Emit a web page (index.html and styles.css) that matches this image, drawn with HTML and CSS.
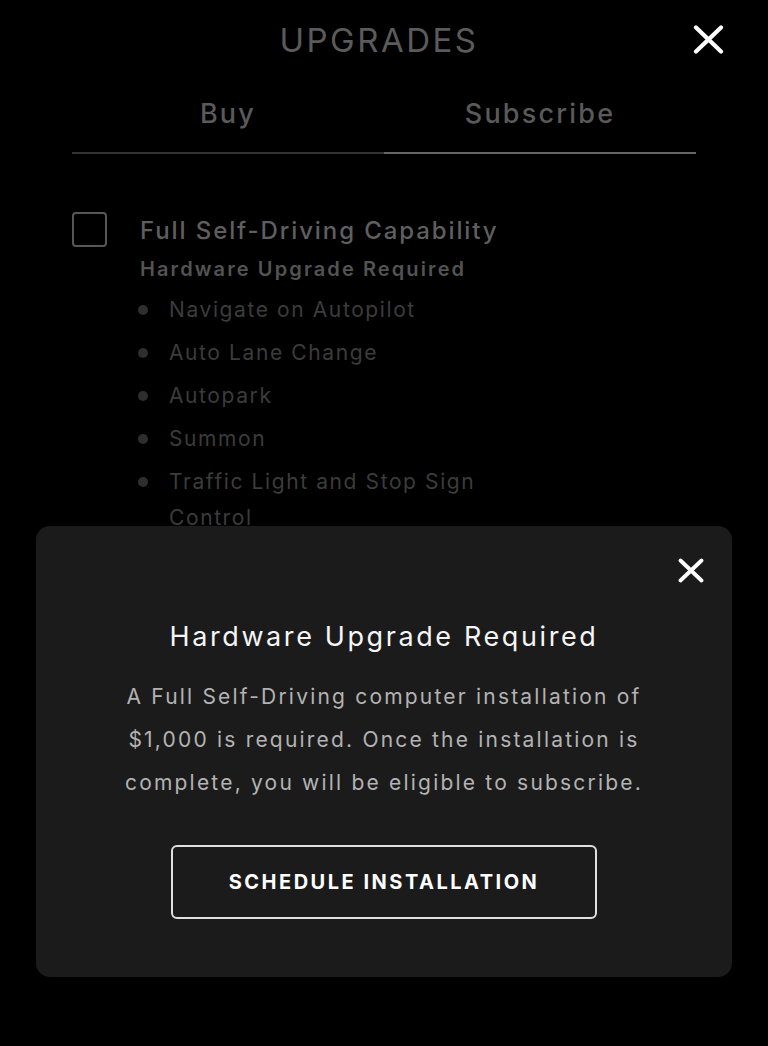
FILE: index.html
```html
<!DOCTYPE html>
<html>
<head>
<meta charset="utf-8">
<link rel="stylesheet" href="styles.css">
</head>
<body>
<div class="page">
  <header class="header">
    <span></span>
    <h1 class="title">UPGRADES</h1>
    <button class="close close-top" aria-label="Close">
      <svg width="31" height="29" viewBox="0 0 31 29"><path d="M3 2.5 L28 26.5 M28 2.5 L3 26.5" stroke="#fff" stroke-width="4.2" stroke-linecap="round" fill="none"/></svg>
    </button>
  </header>
  <nav class="tabs">
    <div class="tab tab-buy">Buy</div>
    <div class="tab tab-sub">Subscribe</div>
  </nav>
  <section class="feature">
    <div class="checkbox"></div>
    <div class="feature-body">
      <div class="feature-title">Full Self-Driving Capability</div>
      <div class="feature-sub">Hardware Upgrade Required</div>
      <ul class="bullets">
        <li>Navigate on Autopilot</li>
        <li>Auto Lane Change</li>
        <li>Autopark</li>
        <li>Summon</li>
        <li>Traffic Light and Stop Sign Control</li>
      </ul>
    </div>
  </section>
</div>
<div class="modal">
  <div class="modal-close-row">
    <button class="close" aria-label="Close">
      <svg width="26" height="25" viewBox="0 0 26 25"><path d="M2.5 2.5 L23.5 22.5 M23.5 2.5 L2.5 22.5" stroke="#fff" stroke-width="3.8" stroke-linecap="round" fill="none"/></svg>
    </button>
  </div>
  <h2 class="modal-title">Hardware Upgrade Required</h2>
  <p class="modal-text">A Full Self-Driving computer installation of $1,000 is required. Once the installation is complete, you will be eligible to subscribe.</p>
  <button class="cta">SCHEDULE INSTALLATION</button>
</div>
</body>
</html>
```
FILE: styles.css
```css
html, body {
  margin: 0;
  padding: 0;
  background: #000;
  height: 100%;
}
body {
  font-family: Inter, "Open Sans", sans-serif;
  color: #fff;
  position: relative;
  overflow: hidden;
}
.page {
  width: 768px;
}
.header {
  display: grid;
  grid-template-columns: 1fr auto 1fr;
  align-items: center;
  height: 80px;
}
.title {
  margin: 0 10px 0 0;
  font-size: 33px;
  font-weight: 400;
  letter-spacing: 2.5px;
  color: #5b5b5b;
  line-height: 80px;
}
.close {
  background: none;
  border: 0;
  padding: 0;
  display: block;
  cursor: pointer;
}
.close svg { display: block; }
.close-top {
  justify-self: end;
  margin-right: 44px;
  margin-top: -1px;
}
.tabs {
  display: grid;
  grid-template-columns: 1fr 1fr;
  margin: 0 72px;
}
.tab {
  height: 74px;
  line-height: 68px;
  text-align: center;
  font-size: 27px;
  font-weight: 500;
  letter-spacing: 2.2px;
  color: #5a5a5a;
  box-sizing: border-box;
  border-bottom: 2px solid #333;
}
.tab-sub {
  border-bottom-color: #666;
}
.feature {
  display: grid;
  grid-template-columns: 35px 1fr;
  column-gap: 33px;
  margin: 58px 72px 0;
}
.checkbox {
  width: 35px;
  height: 35px;
  box-sizing: border-box;
  border: 2px solid #575757;
  border-radius: 4px;
}
.feature-body {
  padding-top: 1px;
}
.feature-title {
  font-size: 24px;
  font-weight: 500;
  letter-spacing: 1.9px;
  line-height: 35px;
  color: #5f5f5f;
}
.feature-sub {
  font-size: 20px;
  font-weight: 600;
  letter-spacing: 2.1px;
  line-height: 28px;
  margin-top: 7px;
  color: #535353;
}
.bullets {
  list-style: none;
  margin: 9px 0 0;
  padding: 0;
  width: 372px;
}
.bullets li {
  position: relative;
  padding-left: 29px;
  font-size: 21px;
  letter-spacing: 1.6px;
  line-height: 36px;
  color: #3c3c3c;
  margin-bottom: 7px;
}
.bullets li::before {
  content: "";
  position: absolute;
  left: -2px;
  top: 13px;
  width: 10px;
  height: 10px;
  border-radius: 50%;
  background: #2e2e2e;
}
.modal {
  position: absolute;
  left: 36px;
  top: 526px;
  width: 696px;
  height: 451px;
  box-sizing: border-box;
  background: #1b1b1b;
  border-radius: 14px;
  padding: 31px 28px 0;
  display: flex;
  flex-direction: column;
  align-items: center;
}
.modal-close-row {
  align-self: stretch;
  display: flex;
  justify-content: flex-end;
  height: 26px;
}
.modal-title {
  margin: 34px 0 0;
  font-size: 27px;
  font-weight: 400;
  letter-spacing: 2.6px;
  line-height: 40px;
  color: #f5f5f5;
}
.modal-text {
  margin: 18px 0 0;
  width: 570px;
  text-align: center;
  font-size: 21px;
  letter-spacing: 2.2px;
  line-height: 43px;
  color: #b3b3b3;
}
.cta {
  margin-top: 41px;
  width: 426px;
  height: 74px;
  box-sizing: border-box;
  background: transparent;
  border: 2px solid #e0e0e0;
  border-radius: 6px;
  color: #fff;
  font-family: inherit;
  font-size: 20px;
  font-weight: 700;
  letter-spacing: 2.5px;
}
```
